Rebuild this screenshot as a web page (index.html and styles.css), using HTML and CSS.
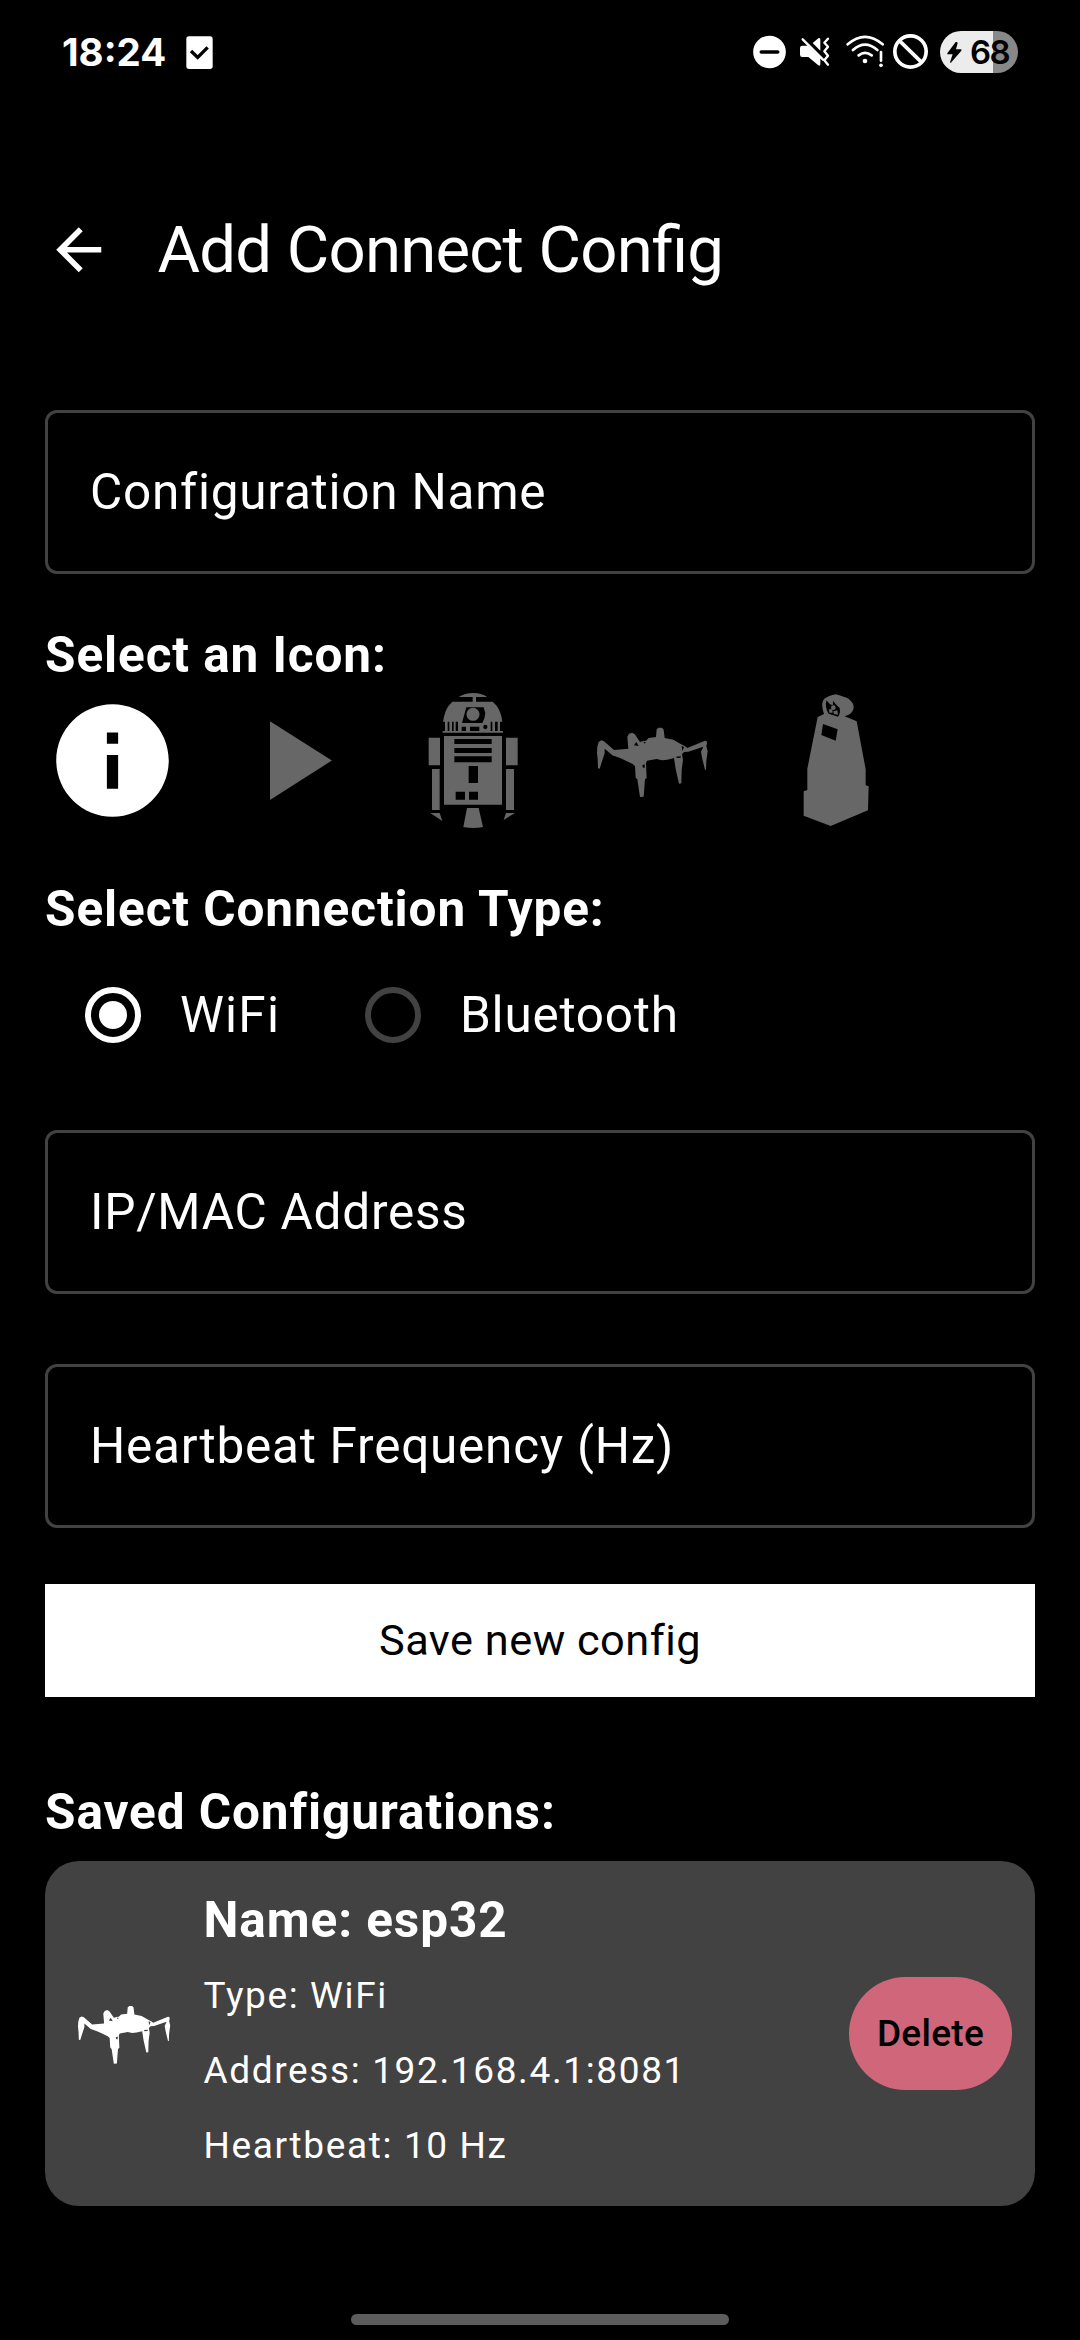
FILE: index.html
```html
<!DOCTYPE html>
<html lang="en">
<head>
<meta charset="utf-8">
<title>Add Connect Config</title>
<link rel="stylesheet" href="styles.css">
</head>
<body>
<svg class="defs" width="0" height="0" aria-hidden="true">
  <symbol id="spider" viewBox="15 -21 405 405">
    <path d="M52 140L56 126L64 121L72 124L102 150L145 146L142 110L147 101L156 98L164 102L180 126L190 123L198 122L206 114L228 111L230 88L236 83L246 83L251 89L254 114L280 119L302 132L314 138L322 144L375 122L380 123L381 132L379 137L383 154L379 182L378 209L375 209L367 177L363 155L370 140L325 155L312 156L306 163L309 180L305 210L304 250L297 251L287 207L282 174L262 179L246 181L230 177L201 182L198 190L200 234L195 238L191 290L180 291L172 238L167 233L165 199L158 192L122 175L97 166L74 146L74 160L68 178L59 206L54 205L53 178L51 158Z"/>
    <path class="cut" d="M169 126L176 138L162 136ZM190 126L197 126L195 131ZM288 170L302 169L302 173L291 174ZM305 137L312 142L307 153ZM187 196L194 193L194 203L189 203Z"/>
  </symbol>
</svg>

<header class="status">
  <span class="clock">18:24</span>
  <svg class="task" viewBox="438 77 81 99"><rect x="439" y="78" width="79" height="98" rx="8" fill="#fff"/><path d="M453 122L473 141L503 111" fill="none" stroke="#000" stroke-width="10"/></svg>
  <div class="indicators">
    <svg width="33" height="44" viewBox="69 60 99 132"><circle cx="118.500" cy="126" r="49" fill="#fff"/><path d="M94 126H143" stroke="#000" stroke-width="11" stroke-linecap="round"/></svg>
    <svg class="gap-mute" width="30" height="44" viewBox="210 60 90 132"><path d="M217 107H233L271 144V162Q271 170 264 165L235 141H217Q210 141 210 134V114Q210 107 217 107ZM248 99L265 85Q271 82 271 89V122Z" fill="#fff"/><path d="M218 88L279 149" stroke="#fff" stroke-width="7" stroke-linecap="round"/><path d="M294 86L283 98L294 110L283 124L294 137L283 151L294 164" fill="none" stroke="#fff" stroke-width="7" stroke-linecap="round" stroke-linejoin="round"/></svg>
    <svg class="gap-wifi" width="39" height="44" viewBox="348 60 117 132"><g fill="none" stroke="#fff" stroke-width="8" stroke-linecap="round"><path d="M353 103Q405 58 458 103M369 120Q405 88 442 120M386 136Q405 121 425 136M453 126V152"/></g><circle cx="405" cy="153" r="7" fill="#fff"/><circle cx="453" cy="166" r="5.500" fill="#fff"/></svg>
    <svg class="gap-block" width="35" height="44" viewBox="489 60 105 132"><circle cx="541.500" cy="124.500" r="47" fill="none" stroke="#fff" stroke-width="11"/><path d="M508 92L575 157" stroke="#fff" stroke-width="11"/></svg>
    <div class="battery">
      <svg width="15" height="21" viewBox="650 95 45 63"><path d="M676 95L651 129Q650 132 653 132H667L659 156Q661 159 663 156L693 121Q695 117 691 117H677L682 98Q680 93 676 95Z"/></svg>
      <span>68</span>
    </div>
  </div>
</header>

<div class="appbar">
  <svg class="back" viewBox="0 0 24 24"><path d="M20 11H7.830l5.590-5.590L12 4l-8 8 8 8 1.410-1.410L7.830 13H20v-2z" fill="#fff"/></svg>
  <h1>Add Connect Config</h1>
</div>

<main>
  <div class="field">Configuration Name</div>

  <h2 class="h-icon">Select an Icon:</h2>
  <div class="icons">
    <svg class="on" viewBox="0 0 24 24"><path d="M12 2C6.480 2 2 6.480 2 12s4.480 10 10 10 10-4.480 10-10S17.520 2 12 2zm1 15h-2v-6h2v6zm0-8h-2V7h2v2z"/></svg>
    <svg viewBox="0 0 24 24"><path d="M8 5v14l11-7z"/></svg>
    <svg viewBox="-15 39 405 405">
      <path d="M146 51Q165 39 190 39Q214 39 232 51H198V65H248L260 77Q274 97 277 125H270V153H279V158H98V153H105V125H99Q104 93 116 77L127 65H188V51Z"/>
      <path d="M102 168H276V374H102ZM56 173H90V256H56ZM288 173H323V256H288ZM66 267H89V390H66ZM288 267H312V390H288ZM61 399H89L97 423ZM288 399H315L281 420ZM171 384H206L219 441Q190 447 160 441Z"/>
      <path class="cut" d="M169 82H221L226 100Q225 115 217 129H156ZM113 125H118V153H113ZM126 125H131V153H126ZM137 125H144V153H137ZM155 140H168V153H155ZM180 140H208V153H180ZM242 125H247V153H242ZM255 125H263V153H255ZM133 177H245V192H133ZM133 204H245V219H133ZM133 229H245V247H133ZM176 258H204V309H176ZM137 335H165V359H137ZM177 335H204V359H177Z"/>
      <circle cx="189" cy="103" r="19.500"/><circle class="cut" cx="226" cy="141" r="6.500"/>
    </svg>
    <svg><use href="#spider"/></svg>
    <svg viewBox="-45 39 405 405">
      <path d="M113 111L132 102Q123 78 129 62Q136 51 155 46L167 43L178 46L204 55Q222 69 221 83Q219 97 206 104L194 109L230 124L257 268V316L266 319L264 391L152 438L71 407V334L82 330V266Z"/>
      <path class="cut" d="M129 132L173 148L167 182L124 165ZM139 61Q134 84 146 101L174 110Q182 101 179 84Q164 70 160 62L158 76L150 73Z"/>
      <circle cx="160" cy="83" r="7"/><path d="M147 88L157 88L158 98L148 98ZM160 94L172 91L174 104L162 102Z"/>
    </svg>
  </div>

  <h2 class="h-type">Select Connection Type:</h2>
  <div class="radios">
    <span class="radio checked"></span><span class="r-label wifi">WiFi</span>
    <span class="radio"></span><span class="r-label">Bluetooth</span>
  </div>

  <div class="field f-address">IP/MAC Address</div>
  <div class="field f-heart">Heartbeat Frequency (Hz)</div>
  <div class="save">Save new config</div>

  <h2 class="h-saved">Saved Configurations:</h2>
  <section class="card">
    <svg class="thumb"><use href="#spider"/></svg>
    <div class="info">
      <h3>Name: esp32</h3>
      <p>Type: WiFi</p>
      <p>Address: 192.168.4.1:8081</p>
      <p>Heartbeat: 10 Hz</p>
    </div>
    <div class="delete">Delete</div>
  </section>
</main>
<div class="handle"></div>
</body>
</html>
```
FILE: styles.css
```css
* { box-sizing: border-box; margin: 0; padding: 0; }
body {
  width: 1080px; height: 2340px; overflow: hidden;
  background: #000; color: #fff;
  font-family: Roboto, sans-serif; font-size: 49.5px; letter-spacing: 0.75px;
  display: flex; flex-direction: column;
}
svg { display: block; flex: none; }
.defs { position: absolute; }
.cut { fill: var(--bg, #000); }

.status { height: 105px; display: flex; align-items: flex-start; padding: 0 62px; }
.clock {
  width: 124px; margin-top: 30px; line-height: 44px;
  font-family: Inter, sans-serif; font-weight: 700; font-size: 38.5px; letter-spacing: 0;
}
.task { width: 27px; height: 33px; margin-top: 36px; }
.indicators { display: flex; margin-left: auto; margin-top: 30px; }
.gap-mute { margin-left: 14px; }
.gap-wifi { margin-left: 16px; }
.gap-block { margin-left: 8px; }
.battery {
  width: 78px; height: 42px; margin: 1px 0 0 12px; border-radius: 21px;
  background: linear-gradient(90deg, #ececec 53px, #888 53px); color: #000;
  display: flex; align-items: center; padding-left: 7px; gap: 8px;
  font-family: Inter, sans-serif; font-weight: 600; font-size: 33px; letter-spacing: -1.5px;
}

.appbar { height: 290px; display: flex; align-items: center; padding-left: 45px; }
.back { width: 67.5px; height: 67.5px; }
h1 {
  margin: 0 0 1px 45px; font-weight: 400; font-size: 65.3px;
  line-height: 78px; letter-spacing: -0.8px; white-space: nowrap;
  font-feature-settings: "liga" 1;
}

main { padding: 15px 45px 0; }
.field {
  height: 164px; border: 3px solid #424242; border-radius: 12px;
  padding-left: 42px; line-height: 158px;
}
h2 { font-size: 49.5px; font-weight: 700; line-height: 75px; letter-spacing: 0.9px; }
.h-icon { margin-top: 44px; }
.icons { display: flex; gap: 45px; fill: #676767; }
.icons svg { width: 135px; height: 135px; }
.icons .on { fill: #fff; }
.h-type { margin-top: 44px; }
.radios { height: 135px; display: flex; align-items: center; padding-left: 40px; }
.radio {
  width: 56px; height: 56px; border: 6px solid #424242; border-radius: 50%;
  display: flex; align-items: center; justify-content: center;
}
.checked { border-color: #fff; }
.checked::before { content: ""; width: 28px; height: 28px; border-radius: 50%; background: #fff; }
.r-label { margin-left: 39px; }
.wifi { width: 185px; letter-spacing: 1.2px; }
.f-address { margin-top: 48px; }
.f-heart { margin-top: 70px; }
.save {
  margin-top: 56px; height: 113px; background: #fff; color: #000;
  text-align: center; line-height: 113px; font-size: 43.3px; letter-spacing: 0.5px;
}
.h-saved { margin-top: 78px; }
.card {
  --bg: #424242; height: 345px; margin-top: 11px; border-radius: 34px; background: #424242;
  display: flex; align-items: center; padding: 0 23px;
}
.thumb { width: 112.5px; height: 112.5px; fill: #fff; }
.info { flex: 1; margin-left: 23px; padding-bottom: 1px; }
h3 { font-size: 49.5px; font-weight: 700; line-height: 75px; letter-spacing: 0.9px; }
.info p { font-size: 37px; line-height: 75px; letter-spacing: 1.63px; }
.delete {
  width: 163px; height: 113px; border-radius: 56.5px; background: #d0667a; color: #000;
  text-align: center; line-height: 113px; font-size: 37px; font-weight: 500; letter-spacing: 0.3px;
}
.handle { width: 378px; height: 11px; border-radius: 6px; background: #5c5c5c; margin: 108px auto 0; }
```
